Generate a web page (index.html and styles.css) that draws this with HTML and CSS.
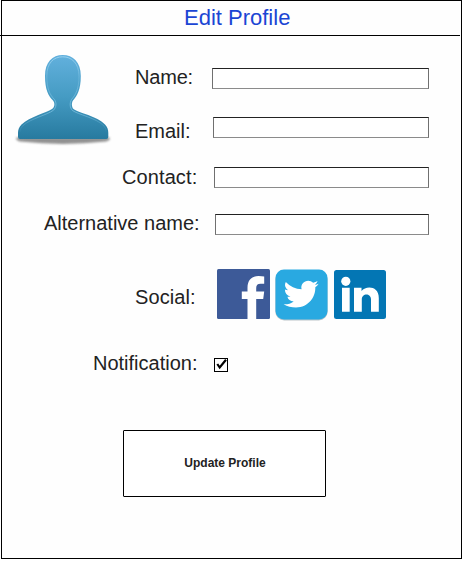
FILE: index.html
```
<!DOCTYPE html>
<html lang="en">
<head>
<meta charset="utf-8">
<title>Edit Profile</title>
<link rel="stylesheet" href="styles.css">
</head>
<body>
<main class="frame">
  <header class="header"><h1>Edit Profile</h1></header>
  <form class="form">
    <div class="top">
      <svg class="avatar" width="98" height="100" viewBox="0 0 98 100">
        <defs>
          <linearGradient id="skin" x1="0" y1="0" x2="0" y2="1">
            <stop offset="0" stop-color="#62b0dd"/>
            <stop offset=".5" stop-color="#459bc3"/>
            <stop offset="1" stop-color="#277a9f"/>
          </linearGradient>
          <linearGradient id="rim" x1="0" y1="0" x2="0" y2="1">
            <stop offset="0" stop-color="#a0d6f2" stop-opacity=".85"/>
            <stop offset=".3" stop-color="#8acbea" stop-opacity=".35"/>
            <stop offset=".7" stop-color="#8acbea" stop-opacity=".65"/>
            <stop offset="1" stop-color="#8acbea" stop-opacity="0"/>
          </linearGradient>
          <filter id="soft" x="-10%" y="-60%" width="120%" height="220%"><feGaussianBlur stdDeviation="1.2"/></filter>
        </defs>
        <path d="M2.500 84.500H95.500Q97 87 92 88.500Q70 90.500 49 91Q28 90.500 6 88.500Q1 87 2.500 84.500Z" fill="#777" opacity=".8" filter="url(#soft)"/>
        <path d="M48.700 2C59 2 66.800 9 66.800 23C66.800 37 63 43 59 47.500C57.500 49.500 57.500 54 59.500 56C65 60 83 63 91 71.500C93.500 74 94.300 77 94.300 80V84Q94.300 86 92.300 86H6Q4 86 4 84V80C4 77 5 74 7.500 71.500C16 63.500 32 60 38 56C41 54 41 50 39 47.500C34.500 43 31 37 31 23C31 9 38.500 2 48.700 2Z" fill="url(#skin)"/>
        <path d="M48.700 3.800C57.500 3.800 65 10 65 23C65 36 61.500 42 57.500 46.500C55.500 50 55.700 54.800 58.500 57.500C64 61.500 82 65 89.500 72.500Q92.500 75.500 92.500 80M5.800 80Q5.800 75.500 9 72.500C17 65.500 33 62 39.500 57.200C42.500 54 42.700 50 40.500 46.500C36 42 32.800 36 32.800 23C32.800 10 39.500 3.800 48.700 3.800" fill="none" stroke="url(#rim)" stroke-width="1"/>
      </svg>
      <div class="fields">
        <div class="row name"><label for="name">Name:</label><input id="name" type="text"></div>
        <div class="row email"><label for="email">Email:</label><input id="email" type="text"></div>
      </div>
    </div>
    <div class="row contact"><label for="contact">Contact:</label><input id="contact" type="text"></div>
    <div class="row alternative"><label for="alt">Alternative name:</label><input id="alt" type="text"></div>
    <div class="row social">
      <span class="label">Social:</span>
      <div class="icons">
        <svg width="53" height="50" viewBox="0 0 53 50">
          <rect width="53" height="50" rx="1.500" fill="#3d5a98"/>
          <path d="M30.500 50V30H24.800V22.500H30.500V18.500C30.500 11 35 7 41.500 7Q45 7 47.200 7.500V14.800H43.500C40.500 14.800 39.200 16.300 39.200 19V22.500H47.200L46.200 30H39.200V50Z" fill="#fff"/>
        </svg>
        <svg width="53" height="52" viewBox="0 0 53 52">
          <rect x=".3" y="1.500" width="52.400" height="50" rx="9" fill="#bcc4c8"/>
          <rect x=".5" y=".5" width="52" height="50" rx="8.500" fill="#29a9e1"/>
          <path d="M10.800 13C15 17.500 20.500 20 26.600 20.300C25.300 15.500 29 11.800 33.300 11.800Q36 11.800 38.200 13.700Q40.500 13.200 42.600 12Q41.900 14.300 39.900 15.800Q41.800 15.600 43.600 14.800Q42.300 16.900 40.300 18.300C40.700 28 33.500 38.500 21 38.500Q14.200 38.500 8.600 35.300C12.300 35.600 15.700 34.700 18.700 32.500Q13.500 32 12.400 27.700H15.500Q9.900 25.800 9.900 20.500L13 21.200Q8.300 17.500 10.800 13Z" fill="#fff"/>
        </svg>
        <svg width="52" height="50" viewBox="0 0 52 50">
          <rect y="1" width="52" height="49" rx="2.500" fill="#0376b4"/>
          <circle cx="11.800" cy="12.300" r="4.600" fill="#fff"/>
          <path d="M8 18.800H15.700V42.800H8ZM20 18.800H27.500V22C32 16.500 44.800 16.800 44.800 29V42.800H37V30.500C37 23.800 27.800 23.800 27.800 30.500V42.800H20Z" fill="#fff"/>
        </svg>
      </div>
    </div>
    <div class="row notification">
      <label for="notify">Notification:</label>
      <span class="check">
        <input id="notify" type="checkbox" checked>
        <svg width="12" height="12" viewBox="0 0 12 12"><path d="M2.300 5L4.700 8.500L11 .8" fill="none" stroke="#000" stroke-width="2.200"/></svg>
      </span>
    </div>
    <button class="submit" type="button">Update Profile</button>
  </form>
</main>
</body>
</html>
```
FILE: styles.css
```
* { box-sizing: border-box; }

body {
  margin: 0;
  background: #fff;
  font-family: "Liberation Sans", Arial, sans-serif;
  color: #222;
}

.frame {
  width: 461px;
  height: 559px;
  margin-left: 1px;
  border: 1px solid #000;
  background: #fefefe;
}

.header {
  width: 460px;
  height: 35px;
  margin-left: -2px;
  padding: 4px 0 0 184px;
  border-bottom: 1px solid #000;
}

h1 {
  margin: 0;
  font-size: 22px;
  line-height: 25px;
  font-weight: 400;
  color: #1b45d4;
  white-space: nowrap;
}

.form {
  display: flex;
  flex-direction: column;
}

.top {
  display: flex;
  height: 130px;
}

.avatar {
  flex: none;
  margin: 17px 0 0 12px;
}

.row {
  display: flex;
  align-items: flex-start;
}

.row label,
.label {
  flex: none;
  font-size: 20px;
  line-height: 23px;
  white-space: nowrap;
}

.row input[type="text"] {
  width: 217px;
  height: 21px;
  margin: 0;
  padding: 0 4px;
  border: 1px solid #707070;
  border-top-color: #222;
  border-bottom-color: #8b8b8b;
  border-radius: 0;
  background: #fff;
}

.name { padding: 30px 0 0 23px; height: 81px; }
.name label { width: 77px; letter-spacing: -0.2px; }
.row.name input { margin-top: 2px; }

.email { padding-left: 23px; }
.email label { width: 78px; margin-top: 3px; }
.row.email input { width: 216px; }

.contact { height: 46px; padding-left: 120px; }
.contact label { width: 92px; letter-spacing: 0.1px; }
.row.contact input { width: 215px; margin-top: 1px; }

.alternative { height: 57px; padding-left: 42px; }
.alternative label { width: 171px; }
.row.alternative input { width: 214px; margin-top: 2px; }

.social { height: 83px; padding-left: 133px; }
.label { width: 82px; margin-top: 17px; letter-spacing: 0.1px; }

.icons {
  display: flex;
  gap: 5px;
  align-items: flex-start;
}

.icons svg { display: block; }
.icons svg:last-child { margin-left: 1px; }

.notification { height: 78px; padding-left: 91px; }
.notification label { width: 121px; }

.check {
  display: grid;
  width: 14px;
  height: 14px;
  margin-top: 6px;
  border: 1px solid #000;
}

.check input,
.check svg {
  grid-area: 1 / 1;
}

.check input {
  appearance: none;
  width: 12px;
  height: 12px;
  margin: 0;
}

.submit {
  width: 203px;
  height: 67px;
  margin-left: 121px;
  padding: 0 0 2px 1px;
  border: 1px solid #000;
  border-radius: 1px;
  background: #fff;
  font: bold 12px "Liberation Sans", Arial, sans-serif;
  color: #222;
}
```
